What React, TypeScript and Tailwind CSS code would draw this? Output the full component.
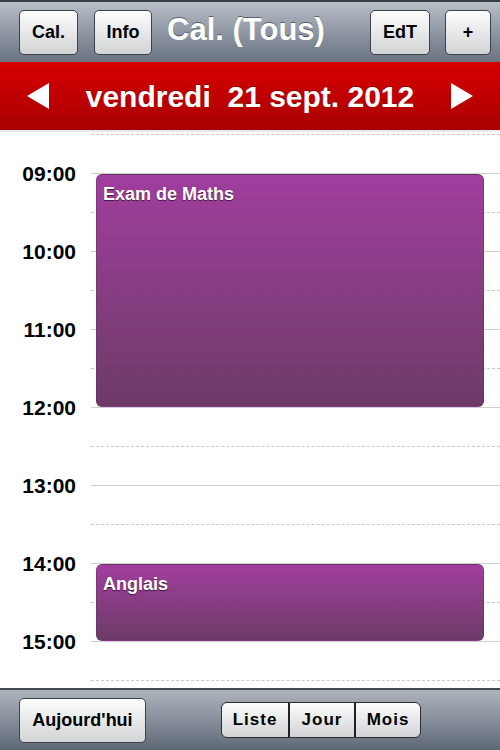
import React from "react";

type CalEvent = {
    title: string;
    start: number; // hours
    end: number;
};

const events: CalEvent[] = [
    { title: "Exam de Maths", start: 9, end: 12 },
    { title: "Anglais", start: 14, end: 15 },
];

// each half hour is 39px, grid starts at 08:30
const SLOT = 39;
const FIRST = 8.5;
const TOP_PAD = 2;

const slots: number[] = [];
for (let h = FIRST; h <= 16; h += 0.5) slots.push(h);

const pad = (n: number) => (n < 10 ? "0" + n : "" + n);

function BarButton({ label, className = "" }: { label: string; className?: string }) {
    return (
        <button
            className={`h-[45px] shrink-0 whitespace-nowrap rounded-[5px] border border-[#3e434a] bg-gradient-to-b from-[#fdfdfd] to-[#d2d3d5] text-[18px] font-bold text-black shadow-[inset_0_1px_0_#fff] ${className}`}
        >
            {label}
        </button>
    );
}

export default function App() {
    return (
        <div
            className="flex h-[750px] w-[500px] flex-col overflow-hidden bg-white"
            style={{ fontFamily: '"Liberation Sans", Arial, sans-serif' }}
        >
            {/* Top toolbar */}
            <div className="relative flex h-[62px] shrink-0 items-center border-t-2 border-[#3a3e44] bg-gradient-to-b from-[#b9bfc8] via-[#8f97a3] to-[#6a7381] pl-[19px] pr-[9px]">
                <BarButton label="Cal." className="w-[59px]" />
                <BarButton label="Info" className="ml-[16px] w-[58px]" />
                <div className="flex-1" />
                <BarButton label="EdT" className="w-[60px]" />
                <BarButton label="+" className="ml-[15px] w-[46px]" />
                {/* title is centred on the bar, not between the buttons */}
                <div className="pointer-events-none absolute inset-x-0 top-[10px] text-center text-[31px] font-bold leading-[36px] text-white [text-shadow:0_-1px_0_rgba(0,0,0,0.45)]">
                    <span className="mr-[8px]">Cal. (Tous)</span>
                </div>
            </div>

            {/* Date bar */}
            <div className="flex h-[70px] shrink-0 items-center justify-between border-b-2 border-[#e8e8e8] bg-gradient-to-b from-[#d80000] to-[#a80000] px-[27px]">
                <svg width="22" height="26" viewBox="0 0 22 26">
                    <path d="M0 13 L22 0 L22 26 Z" fill="#fff" />
                </svg>
                <div className="whitespace-pre text-[30px] font-bold text-white [text-shadow:0_-1px_0_rgba(0,0,0,0.3)]">
                    vendredi  21 sept. 2012
                </div>
                <svg width="22" height="26" viewBox="0 0 22 26">
                    <path d="M22 13 L0 0 L0 26 Z" fill="#fff" />
                </svg>
            </div>

            {/* Day grid */}
            <div className="relative flex-1 overflow-hidden" style={{ paddingTop: TOP_PAD }}>
                {slots.map((h) => {
                    const isHour = h % 1 === 0;
                    return (
                        <div key={h} className="flex h-[39px]">
                            <div className="relative w-[91px]">
                                {isHour && (
                                    <span className="absolute right-[15px] top-0 -translate-y-1/2 text-[21px] font-bold leading-none text-black">
                                        {pad(h)}:00
                                    </span>
                                )}
                            </div>
                            <div
                                className={`flex-1 border-t ${
                                    isHour ? "border-solid border-[#cfcfcf]" : "border-dashed border-[#c9c9c9]"
                                }`}
                            />
                        </div>
                    );
                })}

                {events.map((ev) => (
                    <div
                        key={ev.title}
                        className="absolute left-[96px] right-[16px] rounded-[6px] border border-[#5d2c5b]/40 bg-gradient-to-b from-[#9b3399]/95 to-[#65305f]/95 px-[6px] py-[7px]"
                        style={{
                            top: TOP_PAD + (ev.start - FIRST) * 2 * SLOT + 1,
                            height: (ev.end - ev.start) * 2 * SLOT - 1,
                        }}
                    >
                        <div className="text-[18px] font-bold leading-[24px] text-white [text-shadow:0_1px_1px_rgba(0,0,0,0.6)]">
                            {ev.title}
                        </div>
                    </div>
                ))}
            </div>

            {/* Bottom toolbar */}
            <div className="flex h-[62px] shrink-0 items-center border-t-2 border-[#45494f] bg-gradient-to-b from-[#aeb4bd] via-[#878f9b] to-[#5f6876] pl-[19px]">
                <BarButton label="Aujourd'hui" className="w-[127px]" />
                <div className="ml-[75px] flex h-[36px] overflow-hidden rounded-[6px] border border-[#2c2f33] bg-gradient-to-b from-[#fdfdfd] to-[#d2d3d5]">
                    {["Liste", "Jour", "Mois"].map((s, i) => (
                        <div
                            key={s}
                            className={`flex w-[66px] items-center justify-center text-[17px] font-bold tracking-[1px] text-black ${
                                i > 0 ? "border-l-2 border-[#1f2226]" : ""
                            }`}
                        >
                            {s}
                        </div>
                    ))}
                </div>
            </div>
        </div>
    );
}
